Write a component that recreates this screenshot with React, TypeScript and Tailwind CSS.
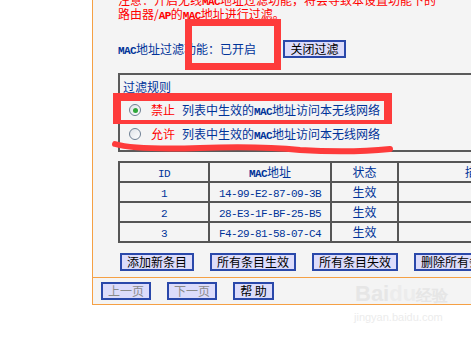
import React from "react";

const F = { fontFamily: '"Noto Sans CJK SC", "Noto Sans", sans-serif' };
const M = "font-['Liberation_Mono',monospace] text-[11px] tracking-[-0.6px] leading-[0]";
const MB = M + " font-bold";

function Btn({ children, className = "" }: { children: React.ReactNode; className?: string }) {
  return (
    <div
      className={
        "h-[18px] flex items-center justify-center border-2 border-[#2a48aa] bg-[#dcdcfb] text-[12px] leading-none " +
        className
      }
    >
      {children}
    </div>
  );
}

function Radio({ on }: { on?: boolean }) {
  return (
    <div className="w-[12px] h-[12px] shrink-0 rounded-full border border-[#6d7f93] bg-gradient-to-br from-[#dfe3e8] to-white flex items-center justify-center">
      {on && <div className="w-[5px] h-[5px] rounded-full bg-[#2fa83a]" />}
    </div>
  );
}

function MacText() {
  return (
    <span>
      列表中生效的<span className={MB}>MAC</span>地址访问本无线网络
    </span>
  );
}

export default function App() {
  const rows = [
    ["1", "14-99-E2-87-09-3B"],
    ["2", "28-E3-1F-BF-25-B5"],
    ["3", "F4-29-81-58-07-C4"],
  ];
  const cell = "border-2 border-[#555] h-[20px] text-center align-middle p-0";
  return (
    <div className="relative w-[471px] h-[337px] bg-white overflow-hidden flex leading-[14px]" style={F}>
      <div className="w-[92px] shrink-0" />
      <div className="w-[379px] shrink-0 h-[305px] border-l border-b border-[#f5a044] bg-[#f4f4f4] flex flex-col">
        <div className="h-[277px] shrink-0 overflow-hidden pl-[25px]">
          <div className="mt-[-7px] text-[12px] leading-[14px] text-[#ff0000] whitespace-nowrap">
            <div className="h-[14px]">
              注意：开启无线<span className={MB}>MAC</span>地址过滤功能，将会导致本设置功能下的
            </div>
            <div className="h-[14px]">
              路由器/<span className={MB}>AP</span>的<span className={MB}>MAC</span>地址进行过滤。
            </div>
          </div>
          <div className="mt-[19px] h-[18px] flex items-center text-[12px] text-[#003399] whitespace-nowrap">
            <span className="w-[165px]">
              <span className={MB}>MAC</span>地址过滤功能：已开启
            </span>
            <Btn className="w-[63px] text-black">关闭过滤</Btn>
          </div>
          <div className="mt-[15px] w-[400px] h-[79px] border-2 border-[#5a5a5a] text-[12px] text-[#003399] whitespace-nowrap">
            <div className="pl-[3px] pt-[5px] h-[19px]">过滤规则</div>
            <div className="mt-[9px] flex items-center pl-[9px] h-[14px]">
              <Radio on />
              <span className="ml-[10px] text-[#ff0000]">禁止</span>
              <span className="ml-[7px]">
                <MacText />
              </span>
            </div>
            <div className="mt-[10px] flex items-center pl-[9px] h-[14px]">
              <Radio />
              <span className="ml-[10px] text-[#ff0000]">允许</span>
              <span className="ml-[7px]">
                <MacText />
              </span>
            </div>
          </div>
          <table className="mt-[9px] w-[440px] border-collapse border-2 border-[#555] text-[12px] text-[#003399] table-fixed">
            <colgroup>
              <col className="w-[90px]" />
              <col className="w-[122px]" />
              <col className="w-[67px]" />
              <col className="w-[161px]" />
            </colgroup>
            <tbody>
              <tr>
                <td className={cell}>
                  <span className={M}>ID</span>
                </td>
                <td className={cell}>
                  <span className={MB}>MAC</span>地址
                </td>
                <td className={cell}>状态</td>
                <td className={cell + " text-left pl-[66px]"}>描述</td>
              </tr>
              {rows.map(([id, mac]) => (
                <tr key={id}>
                  <td className={cell}>
                    <span className={M}>{id}</span>
                  </td>
                  <td className={cell}>
                    <span className={M}>{mac}</span>
                  </td>
                  <td className={cell}>生效</td>
                  <td className={cell}></td>
                </tr>
              ))}
            </tbody>
          </table>
          <div className="mt-[10px] pl-[2px] flex gap-[16px] whitespace-nowrap text-black">
            <Btn className="w-[74px] shrink-0">添加新条目</Btn>
            <Btn className="w-[86px] shrink-0">所有条目生效</Btn>
            <Btn className="w-[86px] shrink-0">所有条目失效</Btn>
            <Btn className="w-[86px] shrink-0">删除所有条目</Btn>
          </div>
        </div>
        <div className="flex-1 border-t border-[#f5a044] flex items-center pl-[8px] gap-[16px] whitespace-nowrap">
          <Btn className="w-[50px] text-[#8a8a8a]">上一页</Btn>
          <Btn className="w-[50px] text-[#8a8a8a]">下一页</Btn>
          <Btn className="w-[41px] text-black">帮&nbsp;助</Btn>
        </div>
      </div>

      {/* annotations */}
      <div className="absolute left-[185px] top-[19px] w-[96px] h-[51px] border-[7px] border-[#fe3b3b]" />
      <div className="absolute left-[113px] top-[93px] w-[279px] h-[31px] border-t-[8px] border-x-[8px] border-b-[4px] border-[#fe3b3b]" />
      <svg className="absolute left-0 top-0" width="471" height="337">
        <path
          d="M115 144 Q 135 150 200 148 Q 260 146 300 150 Q 350 153 390 149"
          stroke="#fe3b3b"
          strokeWidth="6"
          fill="none"
          strokeLinecap="round"
        />
      </svg>

      {/* watermark */}
      <div className="absolute left-[355px] top-[283px] text-[22px] leading-none font-bold text-[#e6e6e6] font-['Liberation_Sans',sans-serif]">
        Bai<span className="text-[#ececec]">du</span>
        <span className="text-[16px]">经验</span>
      </div>
      <div className="absolute left-[354px] top-[310px] text-[11px] text-[#ececec] font-['Liberation_Sans',sans-serif]">
        jingyan.baidu.com
      </div>
    </div>
  );
}
